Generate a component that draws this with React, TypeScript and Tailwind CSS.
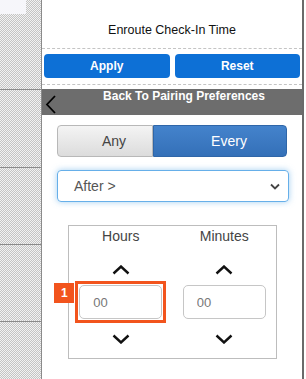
import React from "react";

const ChevronUp: React.FC = () => (
  <svg width="18" height="10" viewBox="0 0 18 10" fill="none">
    <path d="M1.5 8.5 L9 1.5 L16.5 8.5" stroke="#111" strokeWidth="2.4" />
  </svg>
);

const ChevronDown: React.FC = () => (
  <svg width="18" height="10" viewBox="0 0 18 10" fill="none">
    <path d="M1.5 1.5 L9 8.5 L16.5 1.5" stroke="#111" strokeWidth="2.4" />
  </svg>
);

const TimeColumn: React.FC<{ label: string; highlight?: boolean }> = ({ label, highlight }) => (
  <div className="flex flex-col items-center">
    <div className="mt-[2px] text-[14px] leading-[17px] text-[#444]">{label}</div>
    <div className="mt-[20px] h-[10px] flex items-center">
      <ChevronUp />
    </div>
    <div className="relative mt-[10px]">
      {highlight && (
        <>
          <div className="absolute -inset-[4px] border-[3px] border-[#f2541d]" />
          <div className="absolute left-[-25px] top-[-2px] w-[20px] h-[20px] bg-[#f2541d] text-white text-[12px] font-bold flex items-center justify-center">
            1
          </div>
        </>
      )}
      <input
        type="text"
        readOnly
        value="00"
        className="w-[83px] h-[34px] rounded-[5px] border border-[#c6c6c6] bg-white pl-[13px] text-[13px] text-[#777] outline-none font-[family-name:'Liberation_Sans',Arial,sans-serif]"
      />
    </div>
    <div className="mt-[15px] h-[10px] flex items-center">
      <ChevronDown />
    </div>
  </div>
);

const App: React.FC = () => {
  return (
    <div className="w-[306px] h-[379px] flex bg-white overflow-hidden font-[family-name:'Liberation_Sans',Arial,sans-serif]">
      {/* left strip */}
      <div className="w-[42px] h-full border-r border-[#8a8a8a] flex flex-col bg-[repeating-conic-gradient(#c4c4c4_0_25%,#f2f2f2_0_50%)] bg-[length:2px_2px]">
        <div className="h-[14px] w-[26px] bg-[#f6f6fa]" />
        <div className="h-[76px] border-b border-[#8a8a8a]" />
        <div className="h-[78px] border-b border-[#8a8a8a]" />
        <div className="h-[77px] border-b border-[#8a8a8a]" />
        <div className="h-[77px] border-b border-[#8a8a8a]" />
      </div>

      {/* panel */}
      <div className="w-[262px] h-full border-r-2 border-[#6a6a6a] flex flex-col">
        <div className="h-[49px] pt-[23px] border-b border-dashed border-[#c4c4c4] text-center text-[12.5px] leading-[14px] text-[#111]">
          Enroute Check-In Time
        </div>
        <div className="flex gap-[5px] px-[2px] pt-[5px] pb-[6px] border-b border-dashed border-[#c4c4c4]">
          <button className="w-[126px] h-[24px] rounded-[4px] bg-[#0d70d6] text-white text-[12px] font-bold">
            Apply
          </button>
          <button className="w-[126px] h-[24px] rounded-[4px] bg-[#0d70d6] text-white text-[12px] font-bold">
            Reset
          </button>
        </div>
        <div className="mt-[4px] h-[26px] bg-[#6d6d6d] relative">
          <div className="pl-[24px] text-center text-white text-[12px] font-bold leading-[15px]">
            Back To Pairing Preferences
          </div>
          <svg className="absolute left-[3px] top-[6px]" width="12" height="19" viewBox="0 0 12 19" fill="none">
            <path d="M10 1 L2 9.5 L10 18" stroke="#000" strokeWidth="1.8" />
          </svg>
        </div>

        {/* segmented */}
        <div className="mt-[10px] mx-[15px] flex h-[32px]">
          <div className="w-[96px] pl-[18px] rounded-l-[4px] border border-[#b8b8b8] bg-gradient-to-b from-[#f4f4f4] to-[#dcdcdc] flex items-center justify-center text-[14px] text-[#444]">
            Any
          </div>
          <div className="flex-1 pl-[18px] rounded-r-[4px] border border-[#2f66a8] bg-gradient-to-b from-[#4483cc] to-[#3470b8] flex items-center justify-center text-[14px] text-white">
            Every
          </div>
        </div>

        {/* select */}
        <div className="mt-[13px] ml-[15px] w-[232px] h-[32px] rounded-[4px] border border-[#66afe9] shadow-[0_0_6px_rgba(102,175,233,0.6)] flex items-center justify-between pl-[16px] pr-[8px] text-[14px] text-[#555]">
          <span>After &gt;</span>
          <svg width="10" height="7" viewBox="0 0 10 7" fill="none">
            <path d="M1 1.5 L5 5.5 L9 1.5" stroke="#444" strokeWidth="1.8" />
          </svg>
        </div>

        {/* time box */}
        <div className="mt-[23px] ml-[26px] w-[209px] h-[134px] border border-[#bdbdbd] grid grid-cols-2">
          <TimeColumn label="Hours" highlight />
          <TimeColumn label="Minutes" />
        </div>
      </div>
    </div>
  );
};

export default App;
